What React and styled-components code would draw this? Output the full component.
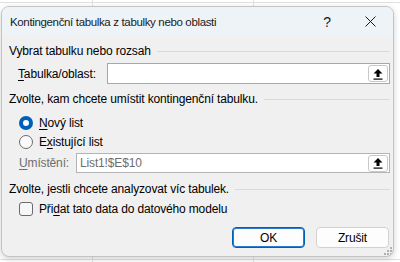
import React from 'react';
import styled, { createGlobalStyle } from 'styled-components';

const GlobalStyle = createGlobalStyle`
  html, body {
    margin: 0;
    padding: 0;
    width: 400px;
    height: 262px;
    overflow: hidden;
  }
  body {
    background-color: #ffffff;
    background-image:
      linear-gradient(#e0e0e0, #e0e0e0),
      linear-gradient(#e0e0e0, #e0e0e0),
      linear-gradient(#e0e0e0, #e0e0e0),
      linear-gradient(#e0e0e0, #e0e0e0);
    background-size: 1px 262px, 1px 262px, 400px 1px, 400px 1px;
    background-position: 92px 0, 253px 0, 0 2px, 0 259px;
    background-repeat: no-repeat;
    font-family: 'Liberation Sans', Arial, sans-serif;
    font-size: 12px;
    letter-spacing: -0.15px;
    color: #000;
  }
  #root {
    padding: 6px 0 0 1px;
  }
`;

const Window = styled.div`
  position: relative;
  width: 393px;
  height: 251px;
  box-sizing: border-box;
  border: 1px solid #c4c4c4;
  border-radius: 8px;
  background: #f0f0f0;
  overflow: hidden;
  display: flex;
  flex-direction: column;
  box-shadow: 0 2px 6px rgba(0, 0, 0, 0.18);
`;

const TitleBar = styled.div`
  height: 29px;
  background: #eef3f8;
  display: flex;
  align-items: center;
  padding-left: 8px;
`;

const Title = styled.div`
  flex: 1;
  font-size: 11.5px;
  letter-spacing: -0.35px;
  color: #1a1a1a;
`;

const TitleButton = styled.div`
  width: ${(p) => p.$w}px;
  height: 29px;
  display: flex;
  align-items: center;
  justify-content: center;
  font-size: 14px;
  color: #1a1a1a;
`;

const Content = styled.div`
  flex: 1;
  display: flex;
  flex-direction: column;
  padding: 7px 3px 0 7px;
`;

const Heading = styled.div`
  display: flex;
  align-items: center;
  gap: 6px;
  height: 16px;
  margin-top: ${(p) => p.$mt || 0}px;
  white-space: nowrap;
  &::after {
    content: '';
    flex: 1;
    height: 1px;
    background: #d9d9d9;
  }
`;

const FieldRow = styled.div`
  display: flex;
  align-items: center;
  margin-top: ${(p) => p.$mt || 0}px;
  padding-left: ${(p) => p.$pl || 0}px;
`;

const FieldLabel = styled.span`
  width: ${(p) => p.$w}px;
  color: ${(p) => (p.$disabled ? '#6d6d6d' : '#000')};
  flex-shrink: 0;
`;

const InputBox = styled.div`
  flex: 1;
  height: ${(p) => p.$h}px;
  box-sizing: border-box;
  border: 1px solid ${(p) => (p.$disabled ? '#b4b4b4' : '#a8a8a8')};
  background: #fff;
  display: flex;
  align-items: center;
  justify-content: space-between;
  padding: 0 1px 0 3px;
  color: #6d6d6d;
`;

const PickButton = styled.div`
  width: 20px;
  height: 17px;
  box-sizing: border-box;
  border: 1px solid #c8c8c8;
  border-radius: 3px;
  background: #fff;
  display: flex;
  align-items: center;
  justify-content: center;
`;

const OptionRow = styled.div`
  display: flex;
  align-items: center;
  gap: 6px;
  height: 16px;
  padding-left: 10px;
  margin-top: ${(p) => p.$mt || 0}px;
`;

const Radio = styled.span`
  width: 14px;
  height: 14px;
  box-sizing: border-box;
  border-radius: 50%;
  border: ${(p) => (p.$checked ? '4px solid #005fb8' : '1px solid #6b6b6b')};
  background: ${(p) => (p.$checked ? '#fff' : '#fbfbfb')};
`;

const Checkbox = styled.span`
  width: 14px;
  height: 14px;
  box-sizing: border-box;
  border: 1px solid #6b6b6b;
  border-radius: 3px;
  background: #f7f7f7;
`;

const Buttons = styled.div`
  display: flex;
  justify-content: flex-end;
  gap: 11px;
  margin-top: 10px;
  padding-right: 1px;
`;

const Button = styled.div`
  width: 73px;
  height: 21px;
  box-sizing: border-box;
  border-radius: 4px;
  border: 1px solid ${(p) => (p.$primary ? '#005fb8' : '#d1d1d1')};
  box-shadow: ${(p) => (p.$primary ? 'inset 0 0 0 1px #2b7bd0' : 'none')};
  background: #fdfdfd;
  display: flex;
  align-items: center;
  justify-content: center;
`;

const Grip = styled.svg`
  position: absolute;
  right: 1px;
  bottom: 1px;
`;

const Key = styled.u`
  text-underline-offset: 2px;
`;

const UploadIcon = () => (
  <svg width="10" height="12" viewBox="0 0 10 12">
    <path d="M5 1 L9.5 5.5 L6.5 5.5 L6.5 9 L3.5 9 L3.5 5.5 L0.5 5.5 Z" fill="#000" />
    <rect x="0.5" y="10.5" width="9" height="1.2" fill="#000" />
  </svg>
);

export default function App() {
  return (
    <>
      <GlobalStyle />
      <Window>
        <TitleBar>
          <Title>Kontingenční tabulka z tabulky nebo oblasti</Title>
          <TitleButton $w={40}>?</TitleButton>
          <TitleButton $w={46}>
            <svg width="11" height="11" viewBox="0 0 11 11">
              <path d="M0.5 0.5 L10.5 10.5 M10.5 0.5 L0.5 10.5" stroke="#1a1a1a" strokeWidth="1" />
            </svg>
          </TitleButton>
        </TitleBar>
        <Content>
          <Heading>Vybrat tabulku nebo rozsah</Heading>
          <FieldRow $mt={4} $pl={9}>
            <FieldLabel $w={89}>
              <Key>T</Key>abulka/oblast:
            </FieldLabel>
            <InputBox $h={21}>
              <span />
              <PickButton>
                <UploadIcon />
              </PickButton>
            </InputBox>
          </FieldRow>
          <Heading $mt={7}>Zvolte, kam chcete umístit kontingenční tabulku.</Heading>
          <OptionRow $mt={8}>
            <Radio $checked />
            <span>
              <Key>N</Key>ový list
            </span>
          </OptionRow>
          <OptionRow $mt={3}>
            <Radio />
            <span>
              E<Key>x</Key>istující list
            </span>
          </OptionRow>
          <FieldRow $mt={3} $pl={10}>
            <FieldLabel $w={57} $disabled>
              <Key>U</Key>místění:
            </FieldLabel>
            <InputBox $h={20} $disabled>
              <span>List1!$E$10</span>
              <PickButton>
                <UploadIcon />
              </PickButton>
            </InputBox>
          </FieldRow>
          <Heading $mt={8}>Zvolte, jestli chcete analyzovat víc tabulek.</Heading>
          <OptionRow $mt={4}>
            <Checkbox />
            <span>
              Při<Key>d</Key>at tato data do datového modelu
            </span>
          </OptionRow>
          <Buttons>
            <Button $primary>OK</Button>
            <Button>Zrušit</Button>
          </Buttons>
        </Content>
        <Grip width="8" height="8" viewBox="0 0 8 8">
          <rect x="6" y="0" width="2" height="2" fill="#b0b0b0" />
          <rect x="3" y="3" width="2" height="2" fill="#b0b0b0" />
          <rect x="6" y="3" width="2" height="2" fill="#b0b0b0" />
          <rect x="0" y="6" width="2" height="2" fill="#b0b0b0" />
          <rect x="3" y="6" width="2" height="2" fill="#b0b0b0" />
          <rect x="6" y="6" width="2" height="2" fill="#b0b0b0" />
        </Grip>
      </Window>
    </>
  );
}
